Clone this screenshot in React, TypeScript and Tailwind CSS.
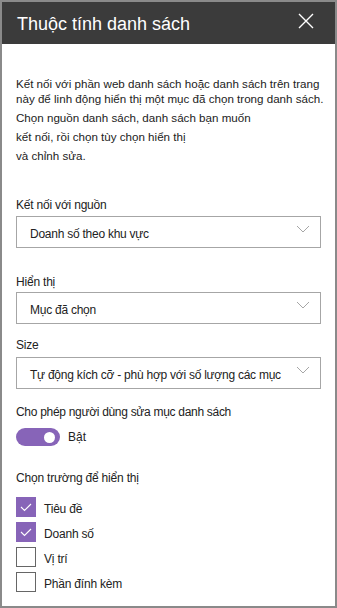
import React from "react";

const font = { fontFamily: '"Liberation Sans", Arial, sans-serif' };

function Chevron() {
  return (
    <svg width="14" height="8" viewBox="0 0 14 8" className="shrink-0">
      <path d="M1 1 L7 7 L13 1" fill="none" stroke="#a6a6a6" strokeWidth="1" />
    </svg>
  );
}

function Dropdown({ value }: { value: string }) {
  return (
    <div className="h-[32px] border border-[#a6a6a6] flex items-center justify-between pl-[13px] pr-[10px] bg-white">
      <span className="text-[12px] tracking-[-0.25px] text-[#222] pt-[4px] whitespace-nowrap">{value}</span>
      <div className="pb-[6px]">
        <Chevron />
      </div>
    </div>
  );
}

function Checkbox({ checked, label }: { checked: boolean; label: string }) {
  return (
    <div className="flex items-center h-[20px]">
      {checked ? (
        <div className="w-[20px] h-[20px] bg-[#8764b8] flex items-center justify-center">
          <svg width="20" height="20" viewBox="0 0 20 20">
            <path d="M5 10 L8.5 13.5 L15 7" fill="none" stroke="#fff" strokeWidth="1.1" />
          </svg>
        </div>
      ) : (
        <div className="w-[20px] h-[20px] border border-[#666] bg-white" />
      )}
      <span className="ml-[8px] text-[12px] tracking-[-0.2px] text-[#222] pt-[4px]">{label}</span>
    </div>
  );
}

export default function App() {
  return (
    <div
      className="w-[337px] h-[608px] border-2 border-[#8a8a8a] bg-white overflow-hidden flex flex-col"
      style={font}
    >
      {/* header */}
      <div className="h-[42px] bg-[#3b3b3b] flex items-center justify-between pl-[15px] pr-[21px] shrink-0">
        <span className="text-[18px] text-white pt-[2px]">Thuộc tính danh sách</span>
        <svg width="16" height="16" viewBox="0 0 16 16" className="mt-[-4px]">
          <path d="M1 1 L15 15 M15 1 L1 15" stroke="#fff" strokeWidth="1.4" />
        </svg>
      </div>

      <div className="px-[14px] flex flex-col text-[#222]">
        {/* description */}
        <div className="mt-[32px] text-[11.6px] whitespace-nowrap">
          <div className="leading-[15px]">Kết nối với phần web danh sách hoặc danh sách trên trang</div>
          <div className="leading-[15px]">này để linh động hiển thị một mục đã chọn trong danh sách.</div>
          <div className="mt-[2px] leading-[19px]">Chọn nguồn danh sách, danh sách bạn muốn</div>
          <div className="leading-[19px]">kết nối, rồi chọn tùy chọn hiển thị</div>
          <div className="leading-[19px]">và chỉnh sửa.</div>
        </div>

        <div className="mt-[32px] text-[12px] tracking-[-0.2px] leading-[16px]">Kết nối với nguồn</div>
        <div className="mt-[3px]">
          <Dropdown value="Doanh số theo khu vực" />
        </div>

        <div className="mt-[26px] text-[12px] tracking-[-0.2px] leading-[16px]">Hiển thị</div>
        <div className="mt-[2px]">
          <Dropdown value="Mục đã chọn" />
        </div>

        <div className="mt-[13px] text-[12px] tracking-[-0.2px] leading-[16px]">Size</div>
        <div className="mt-[4px]">
          <Dropdown value="Tự động kích cỡ - phù hợp với số lượng các mục" />
        </div>

        <div className="mt-[15px] text-[12px] tracking-[-0.3px] leading-[16px]">Cho phép người dùng sửa mục danh sách</div>
        <div className="mt-[8px] flex items-center">
          <div className="w-[44px] h-[18px] rounded-full bg-[#8764b8] flex items-center justify-end pr-[5px]">
            <div className="w-[11px] h-[11px] rounded-full bg-white" />
          </div>
          <span className="ml-[8px] text-[12px]">Bật</span>
        </div>

        <div className="mt-[24px] text-[12px] tracking-[-0.2px] leading-[16px]">Chọn trường để hiển thị</div>
        <div className="mt-[11px] flex flex-col gap-[5px]">
          <Checkbox checked label="Tiêu đề" />
          <Checkbox checked label="Doanh số" />
          <Checkbox checked={false} label="Vị trí" />
          <Checkbox checked={false} label="Phần đính kèm" />
        </div>
      </div>
    </div>
  );
}
